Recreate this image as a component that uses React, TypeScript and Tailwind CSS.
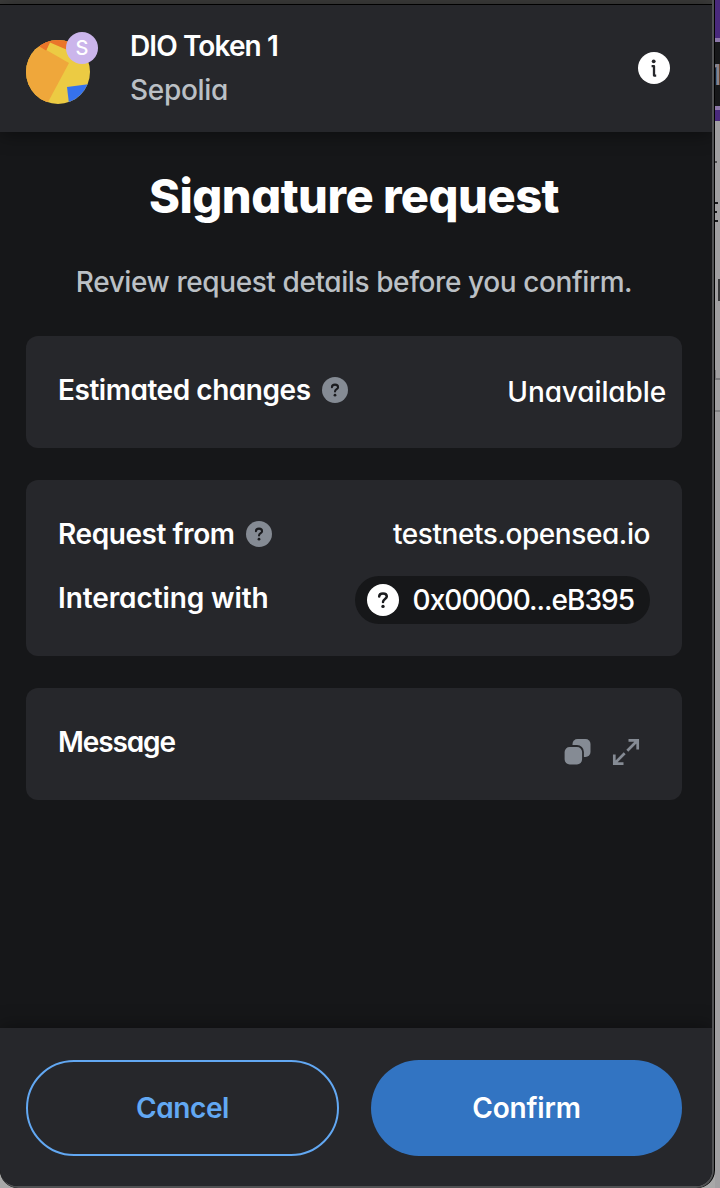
import type { ReactNode } from "react";

function HelpIcon({ className }: { className: string }) {
  return (
    <svg viewBox="0 0 32 32" className={className}>
      <circle cx="16" cy="16" r="16" fill="currentColor" />
      <path
        d="M12.2 12.6C12.2 10.5 13.8 9.4 16 9.4S19.8 10.7 19.8 12.5C19.8 14.9 16 15 16 17.9"
        fill="none"
        className="stroke-[#1b1c1f]"
        strokeWidth="2.5"
        strokeLinecap="round"
      />
      <circle cx="16" cy="22.4" r="1.7" className="fill-[#1b1c1f]" />
    </svg>
  );
}

function AccountAvatar() {
  return (
    <div className="relative mt-[35px] h-16 w-16 shrink-0">
      <svg viewBox="0 0 64 64" className="h-16 w-16">
        <clipPath id="avatar">
          <circle cx="32" cy="32" r="32" />
        </clipPath>
        <g clipPath="url(#avatar)">
          <rect width="64" height="64" fill="#eccb43" />
          <path d="M0 0H60V18L24 2.5L19 13L12 6Z" fill="#ea752a" />
          <path d="M-4 -4L43 23L21 64H-4Z" fill="#efa73b" />
          <path d="M12 5.5L16 0H24L20 10.5Z" fill="#ea752a" />
          <path d="M41 47L64 44V64H43Z" fill="#3672ed" />
        </g>
      </svg>
      <span className="absolute -top-2 left-10 flex h-8 w-8 items-center justify-center rounded-full bg-[#cbb5eb] text-[20px] font-medium leading-8 text-white">
        S
      </span>
    </div>
  );
}

function Card({ children, className }: { children: ReactNode; className: string }) {
  return <section className={`mx-[26px] w-[656px] rounded-xl bg-[#26272b] pl-8 ${className}`}>{children}</section>;
}

function PageBehind() {
  return (
    <div className="flex w-[5px] flex-col overflow-hidden bg-[#a09fa1]">
      <div className="h-[38px] bg-[#49297c]" />
      <div className="h-1 bg-[#8c78a9]" />
      <div className="h-16 overflow-hidden bg-[#17181a]">
        <div className="-ml-[5px] mt-[17px] text-[28px] leading-8 text-[#87838d]">1</div>
      </div>
      <div className="h-1 bg-[#8c78a9]" />
      <div className="h-[11px] bg-[#49297c]" />
      <div className="mt-10 h-0.5 w-0.5 bg-[#4c4c4e]" />
      <div className="mt-[39px] flex flex-col gap-[7px]">
        <div className="h-[2px] w-[3px] bg-[#17181a]" />
        <div className="h-[2px] w-[2px] bg-[#17181a]" />
        <div className="h-[2px] w-[3px] bg-[#17181a]" />
      </div>
      <div className="ml-[3px] mt-[57px] h-[22px] bg-[#38383a]" />
      <div className="mt-[69px] h-2 w-px bg-[#77777a]" />
      <div className="h-0.5 bg-[#77777a]" />
      <div className="mt-[30px] h-0.5 bg-[#818183]" />
    </div>
  );
}

export default function App() {
  return (
    <div className="flex h-[1188px] w-[720px] overflow-hidden bg-[#a8a8a8] font-['Inter','Liberation_Sans',sans-serif] text-[28px] font-[450] leading-10 text-white [font-feature-settings:'cv11']">
      <div className="w-[715px] overflow-hidden rounded-b-[18px] bg-black pr-px">
        <div className="flex h-[1188px] w-[714px] flex-col overflow-hidden rounded-b-[18px] border-b-2 border-r-2 border-[#505153] bg-[#161719]">
          <div className="h-1 shrink-0 bg-[#3c3c3b]" />
          <div className="h-px shrink-0 bg-black" />
          <header className="flex h-[127px] shrink-0 bg-[#26272b] pl-[26px] shadow-[0_2px_18px_rgba(0,0,0,0.45)]">
            <AccountAvatar />
            <div className="ml-10 flex-1 pt-[21px]">
              <div className="font-semibold tracking-[-0.9px]">DIO Token 1</div>
              <div className="mt-1 tracking-[-0.3px] text-[#bbc0c5]">Sepolia</div>
            </div>
            <svg viewBox="0 0 32 32" className="mr-[42px] mt-[47px] h-8 w-8">
              <circle cx="16" cy="16" r="16" fill="white" />
              <circle cx="15.7" cy="9.3" r="1.9" fill="#26272b" />
              <path d="M13.6 14.2H16V23.6H18.2" fill="none" stroke="#26272b" strokeWidth="2.3" strokeLinejoin="round" />
            </svg>
          </header>

          <main className="flex-1">
            <h1 className="mt-9 w-[708px] whitespace-nowrap text-center text-[47px] font-extrabold leading-[56px] tracking-[-0.5px]">Signature request</h1>
            <p className="mt-[38px] w-[708px] whitespace-nowrap text-center tracking-[-0.41px] text-[#bbc0c5]">Review request details before you confirm.</p>

            <Card className="mt-[34px] flex h-28 justify-between pr-4 pt-[34px]">
              <div className="flex font-semibold">
                <span className="tracking-[-0.46px]">Estimated changes</span>
                <HelpIcon className="ml-[11px] mt-[7px] h-[26px] w-[26px] text-[#858b94]" />
              </div>
              <span className="pt-0.5 tracking-[-0.12px]">Unavailable</span>
            </Card>

            <Card className="mt-8 h-44 pr-8 pt-[34px]">
              <div className="flex justify-between">
                <div className="flex font-semibold">
                  <span className="tracking-[-0.42px]">Request from</span>
                  <HelpIcon className="ml-[11px] mt-[7px] h-[26px] w-[26px] text-[#858b94]" />
                </div>
                <span className="tracking-[-0.43px]">testnets.opensea.io</span>
              </div>
              <div className="mt-[22px] flex justify-between">
                <span className="pt-0.5 font-semibold tracking-[-0.1px]">Interacting with</span>
                <div className="flex h-12 w-[295px] items-center justify-between rounded-full bg-[#161719] pl-3 pr-4">
                  <HelpIcon className="h-8 w-8 text-white" />
                  <span className="tracking-[-0.98px]">0x00000...eB395</span>
                </div>
              </div>
            </Card>

            <Card className="mt-8 flex h-28 justify-between pr-[42px] pt-[34px]">
              <span className="font-semibold tracking-[-1.1px]">Message</span>
              <div className="flex text-[#858b94]">
                <svg viewBox="0 0 28 28" className="mt-4 h-7 w-7">
                  <rect x="8.5" y="1" width="18" height="18" rx="5" fill="currentColor" />
                  <rect x="-0.3" y="8" width="19.3" height="19.3" rx="6" fill="currentColor" className="stroke-[#26272b]" strokeWidth="1.8" />
                </svg>
                <svg viewBox="0 0 28 28" className="ml-5 mt-4 h-7 w-7" fill="none" stroke="currentColor" strokeWidth="2.7">
                  <path d="M16.5 2.3H25.7V11.5M25.2 2.8L15.3 12.7M12.7 15.3L2.8 25.2M2.3 16.5V25.7H11.5" />
                </svg>
              </div>
            </Card>
          </main>

          <footer className="flex h-[158px] shrink-0 gap-8 bg-[#26272b] pl-[26px] pt-8 font-semibold shadow-[0_-2px_18px_rgba(0,0,0,0.35)]">
            <button className="h-24 w-[313px] rounded-full border-2 border-[#62a8f3] tracking-[-0.4px] text-[#62a8f3]">Cancel</button>
            <button className="h-24 w-[311px] rounded-full bg-[#3274c2] tracking-[-0.2px]">Confirm</button>
          </footer>
        </div>
      </div>
      <PageBehind />
    </div>
  );
}
